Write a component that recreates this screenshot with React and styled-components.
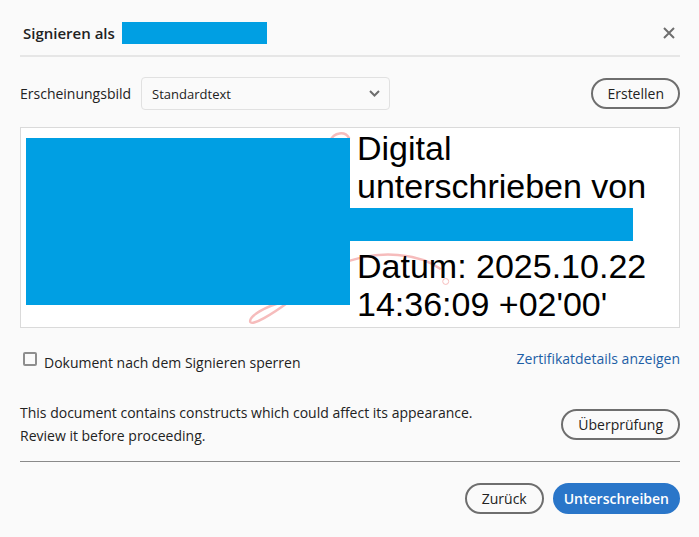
import React from "react";
import styled, { createGlobalStyle } from "styled-components";

const GlobalStyle = createGlobalStyle`
  html, body {
    margin: 0;
    padding: 0;
    background: #fafafa;
  }
  body {
    font-family: "Open Sans", "Noto Sans", sans-serif;
    color: #222;
  }
`;

const Dialog = styled.div`
  width: 699px;
  height: 537px;
  box-sizing: border-box;
  padding: 0 19px 0 20px;
  background: #fafafa;
`;

const Header = styled.div`
  display: flex;
  align-items: center;
  height: 57px;
  padding: 0 1px 0 3px;
  border-bottom: 2px solid #e6e6e6;
  box-sizing: border-box;
`;

const Title = styled.h1`
  display: flex;
  align-items: center;
  gap: 7px;
  margin: 0;
  flex: 1;
  padding-top: 10px;
  font-size: 15px;
  font-weight: 600;
  color: #222;
`;

const Redacted = styled.span`
  display: block;
  width: ${(p) => p.w}px;
  height: ${(p) => p.h}px;
  background: #009fe3;
  flex-shrink: 0;
`;

const CloseBtn = styled.button`
  display: flex;
  align-items: center;
  justify-content: center;
  width: 20px;
  height: 20px;
  margin-top: 10px;
  padding: 0;
  border: none;
  background: none;
`;

const Row = styled.div`
  display: flex;
  align-items: ${(p) => p.align || "center"};
  justify-content: space-between;
  margin-top: ${(p) => p.mt || 0}px;
`;

const FieldGroup = styled.div`
  display: flex;
  align-items: center;
  gap: 10px;
`;

const Label = styled.span`
  font-size: 14px;
  color: #222;
`;

const Select = styled.div`
  display: flex;
  align-items: center;
  justify-content: space-between;
  width: 249px;
  height: 33px;
  box-sizing: border-box;
  padding: 0 9px 0 10px;
  border: 1px solid #e1e1e1;
  border-radius: 4px;
  background: #fafafa;
  font-size: 13px;
  color: #222;
`;

const PillButton = styled.button`
  height: 31px;
  padding: 0 ${(p) => p.px || 16}px;
  box-sizing: border-box;
  border-radius: 16px;
  border: 2px solid ${(p) => (p.primary ? "#2a76c9" : "#6e6e6e")};
  background: ${(p) => (p.primary ? "#2a76c9" : "transparent")};
  color: ${(p) => (p.primary ? "#fff" : "#222")};
  font-family: inherit;
  font-size: 14px;
  font-weight: ${(p) => (p.primary ? 600 : 400)};
  cursor: pointer;
`;

const Preview = styled.div`
  position: relative;
  display: flex;
  align-items: flex-start;
  height: 201px;
  box-sizing: border-box;
  margin-top: 17px;
  padding: 1px 0 0 5px;
  border: 1px solid #dadada;
  background: #fff;
  overflow: hidden;
`;

const Watermark = styled.svg`
  position: absolute;
  left: 0;
  top: 0;
  width: 100%;
  height: 100%;
`;

const PhotoBlock = styled.div`
  position: relative;
  width: 324px;
  height: 167px;
  margin-top: 9px;
  background: #009fe3;
  flex-shrink: 0;
`;

const SignText = styled.div`
  position: relative;
  display: flex;
  flex-direction: column;
  font-family: "Liberation Sans", Arial, sans-serif;
  font-size: 34px;
  line-height: 38px;
  color: #000;
`;

const SignLine = styled.div`
  padding-left: 7px;
  white-space: nowrap;
`;

const NameBar = styled.div`
  width: 283px;
  height: 33px;
  margin: 3px 0 6px;
  background: #009fe3;
`;

const CheckLabel = styled.label`
  display: flex;
  align-items: flex-start;
  gap: 7px;
  padding-left: 3px;
  font-size: 14px;
  line-height: 20px;
  color: #222;
`;

const Box = styled.span`
  display: block;
  width: 14px;
  height: 14px;
  box-sizing: border-box;
  border: 2px solid #8e8e8e;
  border-radius: 2px;
  margin-top: -1px;
`;

const Link = styled.a`
  margin-top: -4px;
  font-size: 14px;
  line-height: 20px;
  color: #1d5fa6;
  text-decoration: none;
`;

const Notice = styled.p`
  margin: 0;
  font-size: 14px;
  line-height: 23px;
  color: #222;
`;

const Divider = styled.hr`
  margin: 14px 0 0;
  border: none;
  border-top: 1px solid #8a8a8a;
`;

const Footer = styled.div`
  display: flex;
  justify-content: flex-end;
  gap: 9px;
  margin-top: 21px;
`;

export default function App() {
  return (
    <>
      <GlobalStyle />
      <Dialog>
        <Header>
          <Title>
            Signieren als <Redacted w={145} h={22} />
          </Title>
          <CloseBtn aria-label="Schließen">
            <svg width="12" height="12" viewBox="0 0 12 12">
              <path d="M1 1 L11 11 M11 1 L1 11" stroke="#6e6e6e" strokeWidth="2" />
            </svg>
          </CloseBtn>
        </Header>

        <Row mt={20}>
          <FieldGroup>
            <Label>Erscheinungsbild</Label>
            <Select>
              Standardtext
              <svg width="11" height="7" viewBox="0 0 11 7">
                <path d="M1 1 L5.5 5.5 L10 1" stroke="#6e6e6e" strokeWidth="2" fill="none" />
              </svg>
            </Select>
          </FieldGroup>
          <PillButton px={14}>Erstellen</PillButton>
        </Row>

        <Preview>
          <Watermark viewBox="0 0 660 201" preserveAspectRatio="none">
            <g stroke="#f6bcbc" strokeWidth="2.5" fill="none" strokeLinecap="round">
              <path d="M310 13 C314 4, 325 3, 329 10" />
              <path d="M268 176 C252 188, 232 200, 230 196 C228 190, 246 180, 262 176" />
              <path d="M330 134 C360 124, 398 126, 420 142" />
            </g>
            <circle cx="426" cy="155" r="3" stroke="#f6bcbc" strokeWidth="1" fill="none" />
          </Watermark>
          <PhotoBlock />
          <SignText>
            <SignLine>Digital</SignLine>
            <SignLine>unterschrieben von</SignLine>
            <NameBar />
            <SignLine>Datum: 2025.10.22</SignLine>
            <SignLine>14:36:09 +02'00'</SignLine>
          </SignText>
        </Preview>

        <Row mt={25} align="flex-start">
          <CheckLabel>
            <Box />
            Dokument nach dem Signieren sperren
          </CheckLabel>
          <Link href="#">Zertifikatdetails anzeigen</Link>
        </Row>

        <Row mt={28}>
          <Notice>
            This document contains constructs which could affect its appearance.
            <br />
            Review it before proceeding.
          </Notice>
          <PillButton px={15}>Überprüfung</PillButton>
        </Row>

        <Divider />

        <Footer>
          <PillButton px={15}>Zurück</PillButton>
          <PillButton primary px={9}>Unterschreiben</PillButton>
        </Footer>
      </Dialog>
    </>
  );
}
